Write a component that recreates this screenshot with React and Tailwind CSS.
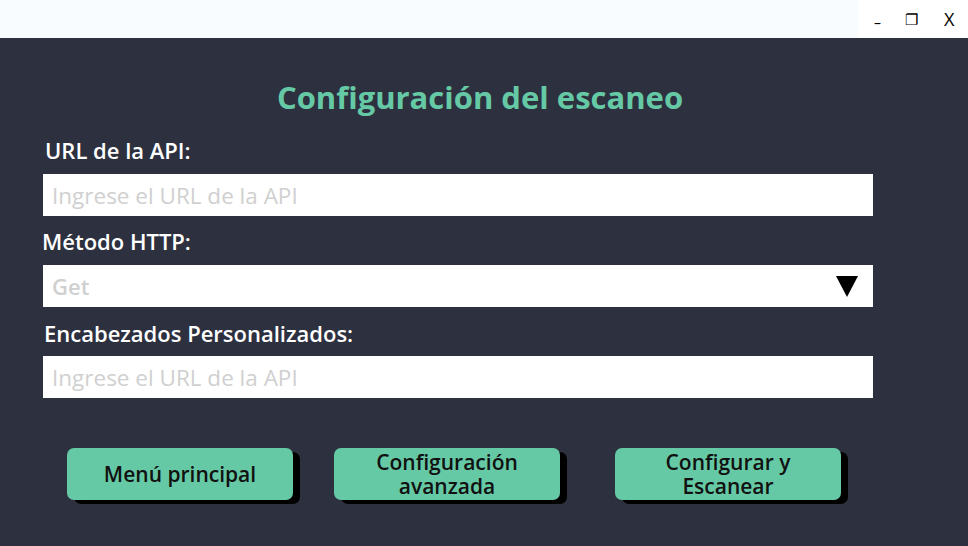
import { useState } from 'react';

const FONT = { fontFamily: '"Open Sans", "Noto Sans", sans-serif' };

function Field({ placeholder, className = '' }) {
  return (
    <input
      className={`block w-[830px] h-[42px] bg-white px-[9px] text-[22.5px] font-medium text-gray-800 placeholder:text-[#d0d0d0] outline-none ${className}`}
      placeholder={placeholder}
    />
  );
}

function ActionButton({ children, className = '' }) {
  return (
    <button
      className={`w-[226px] h-[52px] rounded-[7px] bg-[#66c9a5] text-[#111] text-[21px] font-semibold leading-[24px] shadow-[7px_4px_0_0_#000] ${className}`}
    >
      {children}
    </button>
  );
}

export default function App() {
  const [method, setMethod] = useState('Get');

  return (
    <div className="w-[968px] h-[546px] overflow-hidden flex flex-col" style={FONT}>
      <div className="h-[38px] flex shrink-0">
        <div className="flex-1 bg-[#f8fcff]" />
        <div className="w-[110px] bg-white flex items-center text-black">
          <span className="ml-[16px] text-[14px] mt-[6px]">–</span>
          <span className="ml-[24px] text-[15px]">❐</span>
          <span className="ml-[26px] text-[18px]">X</span>
        </div>
      </div>

      <div className="flex-1 bg-[#2d303f] flex flex-col pl-[43px]">
        <h1 className="mt-[41px] h-9 leading-9 text-center pr-[51px] text-[31px] font-bold text-[#66c9a5]">
          Configuración del escaneo
        </h1>

        <label className="mt-[21px] ml-[2px] h-7 leading-7 text-[22px] font-semibold text-white">URL de la API:</label>
        <Field className="mt-[10px]" placeholder="Ingrese el URL de la API" />

        <label className="mt-[11px] -ml-px h-7 leading-7 text-[22px] font-semibold text-white">Método HTTP:</label>
        <div className="mt-[10px] relative w-[830px] h-[42px] bg-white">
          <select
            value={method}
            onChange={(e) => setMethod(e.target.value)}
            className="w-full h-full appearance-none bg-transparent px-[9px] text-[22px] font-semibold text-[#d0d0d0] outline-none"
          >
            <option>Get</option>
            <option>Post</option>
            <option>Put</option>
            <option>Delete</option>
          </select>
          <svg className="absolute right-[15px] top-[11px] pointer-events-none" width="22" height="21" viewBox="0 0 22 21">
            <path d="M0 0 H22 L11 21 Z" fill="#000" />
          </svg>
        </div>

        <label className="mt-[12px] ml-px h-7 leading-7 text-[22px] font-semibold text-white">Encabezados Personalizados:</label>
        <Field className="mt-[9px]" placeholder="Ingrese el URL de la API" />

        <div className="mt-[50px] flex pl-[24px]">
          <ActionButton>Menú principal</ActionButton>
          <ActionButton className="ml-[41px]">Configuración<br />avanzada</ActionButton>
          <ActionButton className="ml-[55px]">Configurar y<br />Escanear</ActionButton>
        </div>
      </div>
    </div>
  );
}
